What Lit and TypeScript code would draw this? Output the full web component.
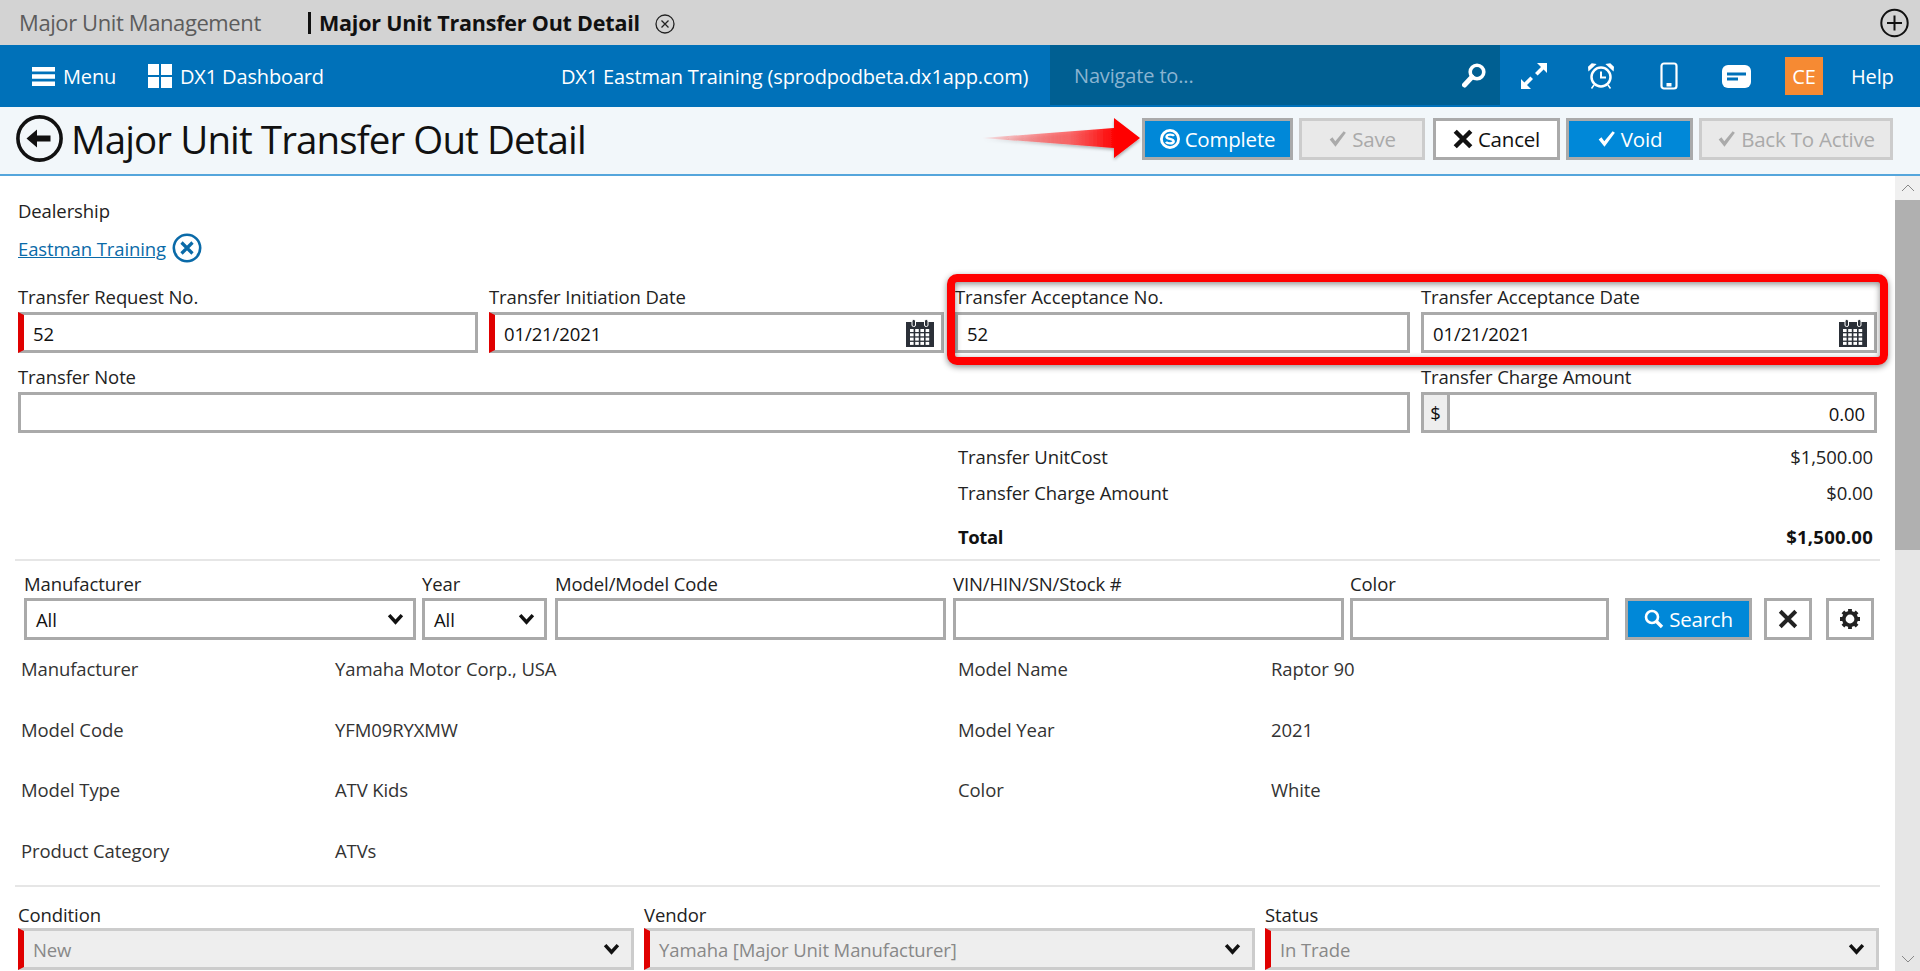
import { LitElement, html, css, svg } from "lit";
import { customElement } from "lit/decorators.js";

const chevron = html`<svg class="chev" viewBox="0 0 16 12"><path d="M.8 3 3.200.8 8 6 12.800.8 15.200 3 8 11z" fill="#111"/></svg>`;
const calendar = html`<svg class="cal" viewBox="0 0 28 28">
  <path d="M0 3h28v25H0z" fill="#2b3038"/>
  <rect x="6" y="0.500" width="3.500" height="7" rx="1.500" fill="#2b3038" stroke="#fff" stroke-width="1"/>
  <rect x="18.500" y="0.500" width="3.500" height="7" rx="1.500" fill="#2b3038" stroke="#fff" stroke-width="1"/>
  <g fill="#fff">
    ${[0, 1, 2, 3].map((r) => [0, 1, 2, 3].map((c) => svg`<rect x="${4 + c * 5.2}" y="${10 + r * 4.300}" width="3.600" height="3"/>`))}
  </g>
</svg>`;

@customElement("app-root")
export class AppRoot extends LitElement {
  static styles = css`
    :host { display: block; width: 1920px; height: 971px; overflow: hidden; position: relative; background: #fff;
      font-family: "Open Sans", "Noto Sans", sans-serif; font-size: 18.5px; color: #222; letter-spacing: -0.1px; }
    * { box-sizing: border-box; }
    svg { display: block; flex: none; }

    .tabs { height: 45px; background: #d3d3d3; display: flex; align-items: center; padding: 0 11px 0 19px; font-size: 22px; line-height: 45px; }
    .tab-a { color: #5c5c5c; width: 289px; letter-spacing: -0.4px; }
    .tab-b { font-weight: 700; color: #111; font-size: 21.5px; letter-spacing: -0.2px; display: flex; align-items: center; }
    .tab-b i { display: block; width: 3px; height: 22px; background: #111; margin-right: 8px; }
    .tab-x { margin: 3px 0 0 15px; }
    .tab-plus { margin-left: auto; }

    .nav { height: 62px; background: #0071b9; color: #fff; display: flex; align-items: center; font-size: 20px; position: relative; letter-spacing: -0.15px; }
    .nav-l { display: flex; align-items: center; gap: 8px; }
    .nav-menu { margin-left: 32px; width: 116px; }
    .nav-dash { gap: 8px; width: 413px; }
    .nav-title { width: 489px; white-space: nowrap; }
    .nav-search { width: 450px; height: 60px; align-self: flex-start; background: #005f92; color: #8ab4d1; display: flex; align-items: center; padding: 0 14px 0 24px; justify-content: space-between; }
    .nav-icons { display: flex; align-items: center; }
    .ce { width: 38px; height: 38px; background: #f68a33; display: flex; align-items: center; justify-content: center; color: #fff; margin-left: 34px; }
    .help { margin-left: 28px; }

    .head { height: 69px; background: #f2f7fa; border-bottom: 2px solid #55a6dc; display: flex; align-items: center; padding: 0 27px 4px 16px; }
    .head h1 { margin: 0 0 0 8px; font-size: 38.5px; font-weight: 400; color: #111; letter-spacing: -0.9px; line-height: 50px; }
    .actions { margin-left: auto; display: flex; gap: 6px; align-items: center; }
    .btn { height: 42px; border: 3px solid #aaa; display: flex; align-items: center; justify-content: center; gap: 5px; font-size: 20.5px; padding: 0; letter-spacing: -0.2px; }
    .primary { background: #0088d8; color: #fff; }
    .plain { background: #fff; color: #111; }
    .off { background: #e9e9e9; border-color: #ccc; color: #aaa; }
    .w-complete { width: 151px; } .w-save { width: 126px; margin-right: 2px; } .w-cancel { width: 127px; } .w-void { width: 127px; } .w-back { width: 194px; }

    .body { height: 795px; display: flex; }
    .main { width: 1895px; overflow: hidden; padding-top: 23px; }
    .scroll { width: 25px; background: #e6e6e6; position: relative; display: flex; flex-direction: column; }
    .sb-up { height: 24px; display: flex; align-items: center; justify-content: center; background: #f0f0f0; }
    .sb-thumb { height: 350px; background: #b0b0b0; }
    .sb-down { margin-top: auto; height: 24px; display: flex; align-items: center; justify-content: center; }

    label, .lab { display: block; height: 25px; line-height: 23px; color: #222; white-space: nowrap; }
    .dealer { padding-left: 18px; }
    .link { display: flex; align-items: center; gap: 6px; margin-top: 9px; padding-bottom: 2px; color: #0a6aa8; height: 32px; }
    .link span { text-decoration: underline; }

    .grid { display: grid; grid-template-columns: 460px 455px 455px 456px; column-gap: 11px; padding-left: 18px; }
    .r1 { margin-top: 20px; }
    .r2 { margin-top: 12px; }
    .note { grid-column: span 3; }
    .f { height: 41px; border: 3px solid #aaa; background: #fff; display: flex; align-items: center; padding: 1px 9px 0; margin-top: 2px; color: #111; }
    .req { border-left: 6px solid #e00000; padding-left: 9px; }
    .f .cal { margin-left: auto; margin-right: -2px; margin-top: -1px; width: 28px; height: 28px; }
    .money { padding: 1px 9px 0 0; justify-content: flex-end; position: relative; }
    .addon { align-self: stretch; width: 26px; background: #eee; border-right: 3px solid #aaa; display: flex; align-items: center; justify-content: center; margin-right: auto; margin-top: -1px; }
    .dis { background: #eee; border-color: #ccc; color: #888; }
    .dis.req { border-left-color: #e00000; }
    .f .chev { width: 17px; height: 13px; margin-left: auto; margin-right: 2px; }

    .totals { margin: 6px 22px 0 958px; }
    .tr { display: flex; justify-content: space-between; line-height: 36px; }
    .tr.b { font-weight: 700; margin-top: 8px; letter-spacing: -0.4px; color: #111; }
    .tr.b span:last-child { letter-spacing: 0.25px; }
    hr { border: 0; border-top: 2px solid #e6e6e6; margin: 0 15px; }
    .totals + hr { margin-top: 4px; }

    .filter { display: flex; padding: 11px 0 0 24px; align-items: flex-end; }
    .filter .f { margin-top: 1px; height: 42px; }
    .filter .sel .chev { margin-right: 0; }
    .c { flex: none; }
    .search { width: 127px; margin-left: 16px; height: 42px; }
    .ib { width: 48px; margin-left: 12px; height: 42px; }
    .ib.last { margin-left: 14px; }

    .info { display: grid; grid-template-columns: 314px 623px 313px 1fr; padding: 0 0 0 21px; line-height: 58px; }
    .info div { height: 60.5px; color: #333; }
    .info + hr { margin-top: 3px; }

    .r3 { display: grid; grid-template-columns: 616px 611px 614px; column-gap: 10px; padding: 16px 0 0 18px; }
    .r3 .f { margin-top: 0; height: 42px; }

    .mark { position: absolute; left: 947px; top: 274px; width: 941px; height: 91px; border: 8px solid #f00; border-radius: 10px; filter: drop-shadow(0 2px 3px rgba(0,0,0,.45)); pointer-events: none; }
    .arrow { position: absolute; left: 980px; top: 115px; pointer-events: none; }
  `;

  private field(label: string, value: string, o: { req?: boolean; cal?: boolean; cls?: string } = {}) {
    return html`<div class=${o.cls ?? ""}>
      <label>${label}</label>
      <div class="f ${o.req ? "req" : ""}"><span>${value}</span>${o.cal ? calendar : ""}</div>
    </div>`;
  }

  private filterSel(label: string, w: number, ml: number) {
    return html`<div class="c" style="width:${w}px;margin-left:${ml}px"><label>${label}</label>
      <div class="f sel"><span>All</span>${chevron}</div></div>`;
  }

  private filterInp(label: string, w: number, ml: number) {
    return html`<div class="c" style="width:${w}px;margin-left:${ml}px"><label>${label}</label><div class="f"></div></div>`;
  }

  private disSel(label: string, value: string) {
    return html`<div><label>${label}</label><div class="f req dis"><span>${value}</span>${chevron}</div></div>`;
  }

  render() {
    const check = (c: string) => html`<svg width="19" height="18" viewBox="0 0 17 16"><path d="M1.500 8.500 4 6.500 6.500 10 14 1l2 1.500L6.700 15z" fill=${c}/></svg>`;
    return html`
      <div class="tabs">
        <div class="tab-a">Major Unit Management</div>
        <div class="tab-b"><i></i>Major Unit Transfer Out Detail</div>
        <svg class="tab-x" width="20" height="20" viewBox="0 0 20 20"><circle cx="10" cy="10" r="9" fill="none" stroke="#222" stroke-width="1.300"/><path d="M6.500 6.500l7 7M13.500 6.500l-7 7" stroke="#222" stroke-width="1.300"/></svg>
        <svg class="tab-plus" width="29" height="30" viewBox="0 0 29 30"><circle cx="14.500" cy="15" r="13.200" fill="none" stroke="#111" stroke-width="2"/><path d="M14.500 7.500v15M7 15h15" stroke="#111" stroke-width="2"/></svg>
      </div>

      <div class="nav">
        <div class="nav-l nav-menu">
          <svg width="23" height="19" viewBox="0 0 23 19"><path d="M0 0h23v4.500H0zM0 7.200h23v4.500H0zM0 14.500h23V19H0z" fill="#fff"/></svg>
          <span>Menu</span>
        </div>
        <div class="nav-l nav-dash">
          <svg width="24" height="24" viewBox="0 0 24 24"><path d="M0 0h11v11H0zM13 0h11v11H13zM0 13h11v11H0zM13 13h11v11H13z" fill="#fff"/></svg>
          <span>DX1 Dashboard</span>
        </div>
        <div class="nav-title">DX1 Eastman Training (sprodpodbeta.dx1app.com)</div>
        <div class="nav-search">
          <span>Navigate to...</span>
          <svg width="24" height="25" viewBox="0 0 24 25"><circle cx="15" cy="9" r="6.800" fill="none" stroke="#fff" stroke-width="3.600"/><path d="M10 14 2.500 22" stroke="#fff" stroke-width="5" stroke-linecap="round"/></svg>
        </div>
        <div class="nav-icons">
          <svg style="margin-left:20px" width="28" height="28" viewBox="0 0 28 28"><path d="M17 1h10v10l-3.400-3.400-6 6-2.600-2.600 6-6zM1 27V17l3.400 3.400 6-6 2.600 2.600-6 6L11 27z" fill="#fff"/></svg>
          <svg style="margin-left:40px" width="26" height="26" viewBox="0 0 26 26"><circle cx="13" cy="14" r="9.500" fill="none" stroke="#fff" stroke-width="2.500"/><path d="M13 8.500V14.500H18" fill="none" stroke="#fff" stroke-width="2"/><path d="M1 7 7 1.500 4 1 .8 4zM25 7 19 1.500 22 1l3.200 3zM6 22l-2.500 3.500M20 22l2.500 3.500" stroke="#fff" stroke-width="1.500" fill="#fff"/></svg>
          <svg style="margin-left:46px" width="18" height="28" viewBox="0 0 18 28"><rect x="1.500" y="1.500" width="15" height="25" rx="2.500" fill="none" stroke="#fff" stroke-width="2.200"/><rect x="6.500" y="21" width="5" height="3.500" fill="#fff"/></svg>
          <svg style="margin-left:44px" width="29" height="23" viewBox="0 0 29 23"><path d="M6 0h17a6 6 0 0 1 6 6v11a6 6 0 0 1-6 6H6a6 6 0 0 1-6-6V6a6 6 0 0 1 6-6z" fill="#fff"/><path d="M5 7.500h19v3H5zM5 12.500h11v3H5z" fill="#0071b9"/></svg>
          <div class="ce">CE</div>
          <div class="help">Help</div>
        </div>
      </div>

      <div class="head">
        <svg width="47" height="47" viewBox="0 0 47 47"><circle cx="23.500" cy="23.500" r="21.600" fill="none" stroke="#111" stroke-width="3.600"/><path d="M10.500 23.500 21 14.500v6h13.500v6H21v6z" fill="#111"/></svg>
        <h1>Major Unit Transfer Out Detail</h1>
        <div class="actions">
          <div class="btn primary w-complete">
            <svg width="20" height="22" viewBox="0 0 20 22"><circle cx="10" cy="11" r="8.600" fill="none" stroke="#fff" stroke-width="2.800"/><path d="M14 7.800c-1-1.500-7-2-7.500.8-.4 2.800 7.500 1.900 7.200 4.900-.4 2.500-6.500 2.300-7.700.3" fill="none" stroke="#fff" stroke-width="2.400"/></svg>
            <span>Complete</span>
          </div>
          <div class="btn off w-save">${check("#aaa")}<span>Save</span></div>
          <div class="btn plain w-cancel">
            <svg width="20" height="20" viewBox="0 0 18 18"><path d="M2 2l14 14M16 2 2 16" stroke="#111" stroke-width="4"/></svg>
            <span>Cancel</span>
          </div>
          <div class="btn primary w-void">${check("#fff")}<span>Void</span></div>
          <div class="btn off w-back">${check("#aaa")}<span>Back To Active</span></div>
        </div>
      </div>

      <div class="body">
        <div class="main">
          <div class="dealer">
            <div class="lab">Dealership</div>
            <div class="link"><span>Eastman Training</span>
              <svg width="30" height="30" viewBox="0 0 30 30"><circle cx="15" cy="15" r="13.200" fill="none" stroke="#0a6aa8" stroke-width="2.600"/><path d="M9.500 9.500l11 11M20.500 9.500l-11 11" stroke="#0a6aa8" stroke-width="3.200"/></svg>
            </div>
          </div>

          <div class="grid r1">
            ${this.field("Transfer Request No.", "52", { req: true })}
            ${this.field("Transfer Initiation Date", "01/21/2021", { req: true, cal: true })}
            ${this.field("Transfer Acceptance No.", "52")}
            ${this.field("Transfer Acceptance Date", "01/21/2021", { cal: true })}
          </div>
          <div class="grid r2">
            ${this.field("Transfer Note", "", { cls: "note" })}
            <div><label>Transfer Charge Amount</label>
              <div class="f money"><div class="addon">$</div><span>0.00</span></div></div>
          </div>

          <div class="totals">
            <div class="tr"><span>Transfer UnitCost</span><span>$1,500.00</span></div>
            <div class="tr"><span>Transfer Charge Amount</span><span>$0.00</span></div>
            <div class="tr b"><span>Total</span><span>$1,500.00</span></div>
          </div>
          <hr />

          <div class="filter">
            ${this.filterSel("Manufacturer", 392, 0)}
            ${this.filterSel("Year", 125, 6)}
            ${this.filterInp("Model/Model Code", 391, 8)}
            ${this.filterInp("VIN/HIN/SN/Stock #", 391, 7)}
            ${this.filterInp("Color", 259, 6)}
            <div class="btn primary search">
              <svg width="20" height="20" viewBox="0 0 20 20"><circle cx="8" cy="8" r="6" fill="none" stroke="#fff" stroke-width="2.600"/><path d="M12.500 12.500 18 18" stroke="#fff" stroke-width="3.400"/></svg>
              <span>Search</span>
            </div>
            <div class="btn plain ib">
              <svg width="20" height="20" viewBox="0 0 18 18"><path d="M2 2l14 14M16 2 2 16" stroke="#222" stroke-width="3.600"/></svg>
            </div>
            <div class="btn plain ib last">
              <svg width="22" height="22" viewBox="0 0 22 22"><circle cx="11" cy="11" r="6.200" fill="none" stroke="#222" stroke-width="3.600"/><path d="M11 1v4M11 17v4M1 11h4M17 11h4M3.900 3.900l2.800 2.800M15.300 15.300l2.800 2.800M18.100 3.900l-2.800 2.800M6.700 15.300l-2.800 2.800" stroke="#222" stroke-width="3.800"/></svg>
            </div>
          </div>

          <div class="info">
            <div>Manufacturer</div><div>Yamaha Motor Corp., USA</div><div>Model Name</div><div>Raptor 90</div>
            <div>Model Code</div><div>YFM09RYXMW</div><div>Model Year</div><div>2021</div>
            <div>Model Type</div><div>ATV Kids</div><div>Color</div><div>White</div>
            <div>Product Category</div><div>ATVs</div><div></div><div></div>
          </div>
          <hr />

          <div class="r3">
            ${this.disSel("Condition", "New")}
            ${this.disSel("Vendor", "Yamaha [Major Unit Manufacturer]")}
            ${this.disSel("Status", "In Trade")}
          </div>
        </div>
        <div class="scroll">
          <div class="sb-up"><svg width="14" height="8" viewBox="0 0 14 8"><path d="M1 7l6-6 6 6" fill="none" stroke="#888" stroke-width="1"/></svg></div>
          <div class="sb-thumb"></div>
          <div class="sb-down"><svg width="14" height="8" viewBox="0 0 14 8"><path d="M1 1l6 6 6-6" fill="none" stroke="#888" stroke-width="1"/></svg></div>
        </div>
      </div>

      <svg class="arrow" width="166" height="48" viewBox="0 0 166 48">
        <defs>
          <linearGradient id="ag" x1="0" x2="1"><stop offset="0" stop-color="#f00" stop-opacity="0.05"/><stop offset="0.55" stop-color="#f44" stop-opacity=".75"/><stop offset="0.85" stop-color="#f00"/></linearGradient>
          <filter id="as"><feDropShadow dx="0" dy="2" stdDeviation="1.500" flood-opacity=".3"/></filter>
        </defs>
        <path d="M2 23 134 13V3l26 20-26 20V33z" fill="url(#ag)" filter="url(#as)"/>
      </svg>
      <div class="mark"></div>
    `;
  }
}
